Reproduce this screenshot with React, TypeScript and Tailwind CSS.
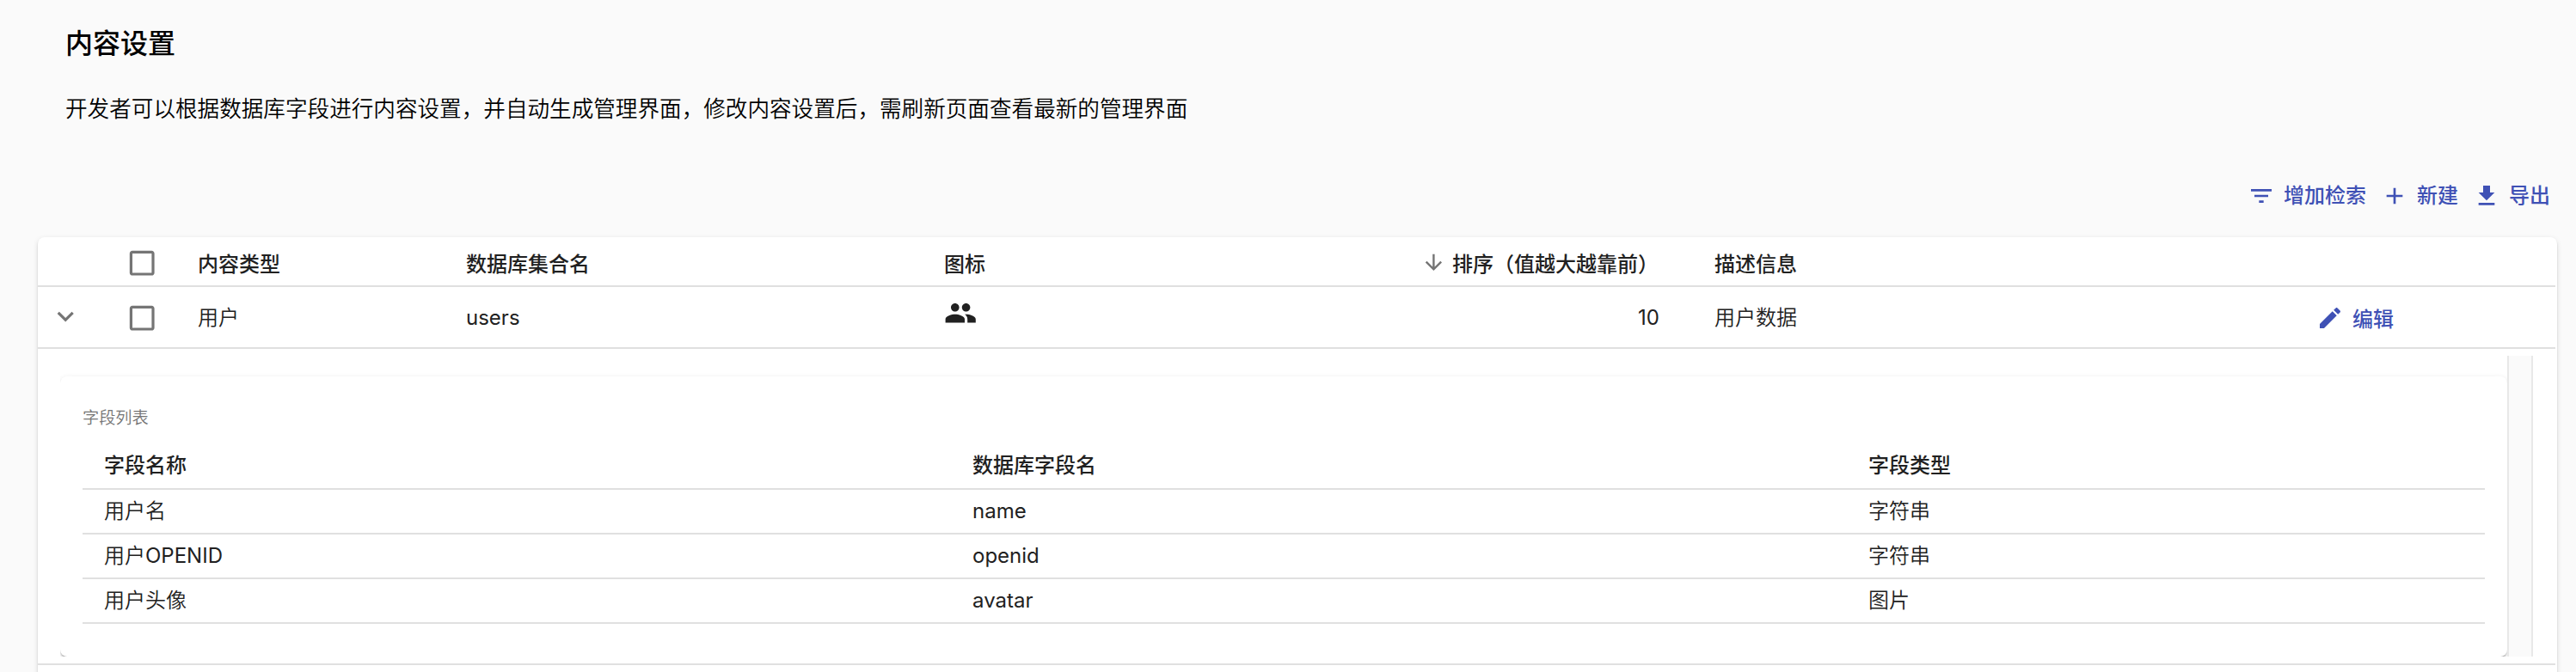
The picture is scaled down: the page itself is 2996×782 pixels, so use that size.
import type { ReactNode } from "react";

const ICONS = {
  filter: "M10 18h4v-2h-4v2zM3 6v2h18V6H3zm3 7h12v-2H6v2z",
  add: "M19 13h-6v6h-2v-6H5v-2h6V5h2v6h6v2z",
  download: "M19 9h-4V3H9v6H5l7 7 7-7zM5 18v2h14v-2H5z",
  edit: "M3 17.25V21h3.75L17.81 9.94l-3.75-3.75L3 17.25zM20.71 7.04c.39-.39.39-1.02 0-1.41l-2.34-2.34c-.39-.39-1.02-.39-1.41 0l-1.83 1.83 3.75 3.75 1.83-1.83z",
  checkbox: "M19 5v14H5V5h14m0-2H5c-1.1 0-2 .9-2 2v14c0 1.1.9 2 2 2h14c1.1 0 2-.9 2-2V5c0-1.1-.9-2-2-2z",
  chevron: "M16.59 8.59L12 13.17 7.41 8.59 6 10l6 6 6-6z",
  arrowDown: "M20 12l-1.41-1.41L13 16.17V4h-2v12.17l-5.58-5.59L4 12l8 8 8-8z",
  group:
    "M16 11c1.66 0 2.99-1.34 2.99-3S17.66 5 16 5c-1.66 0-3 1.34-3 3s1.34 3 3 3zm-8 0c1.66 0 2.99-1.34 2.99-3S9.66 5 8 5C6.34 5 5 6.34 5 8s1.34 3 3 3zm0 2c-2.33 0-7 1.17-7 3.5V19h14v-2.5c0-2.33-4.67-3.5-7-3.5zm8 0c-.29 0-.62.02-.97.05 1.16.84 1.97 1.97 1.97 3.45V19h6v-2.5c0-2.33-4.67-3.5-7-3.5z",
};

function Icon({ name, className }: { name: keyof typeof ICONS; className: string }) {
  return (
    <svg viewBox="0 0 24 24" fill="currentColor" className={`block shrink-0 ${className}`}>
      <path d={ICONS[name]} />
    </svg>
  );
}

function Action({ icon, children }: { icon: keyof typeof ICONS; children: ReactNode }) {
  return (
    <button className="flex items-center gap-2.5 text-[24px] leading-8 font-medium text-[#3f51b5]">
      <Icon name={icon} className="size-8" />
      <span>{children}</span>
    </button>
  );
}

const ROW =
  "mr-0.5 grid grid-cols-[102px_60px_312px_556px_896px_700px_1fr] items-center border-b-2 border-[#e0e0e0]";

const FIELD_ROW =
  "grid grid-cols-[1010px_1042px_1fr] items-center border-b-2 border-[#e0e0e0] *:pl-[25px]";

const FIELDS = [
  { label: "用户名", name: "name", type: "字符串" },
  { label: <>用户<span className="font-normal">OPENID</span></>, name: "openid", type: "字符串" },
  { label: "用户头像", name: "avatar", type: "图片" },
];

const PAPER =
  "bg-white shadow-[0_4px_2px_-2px_rgba(0,0,0,0.2),0_2px_2px_0_rgba(0,0,0,0.14),0_2px_6px_0_rgba(0,0,0,0.12)]";

export default function App() {
  return (
    <div className="h-[782px] overflow-hidden bg-[#fafafa] font-['Inter','Noto_Sans_CJK_SC',sans-serif] font-[350] text-[#212121]">
      <header className="flex h-[204px] flex-col pt-[30px] pl-[76px] text-black">
        <h1 className="text-[32px] leading-[42px] font-medium">内容设置</h1>
        <p className="mt-[36px] text-[25.6px] leading-[38px]">
          开发者可以根据数据库字段进行内容设置，并自动生成管理界面，修改内容设置后，需刷新页面查看最新的管理界面
        </p>
      </header>

      <div className="flex h-[72px] items-start justify-end gap-[17px] pt-2 pr-[30px]">
        <Action icon="filter">增加检索</Action>
        <Action icon="add">新建</Action>
        <Action icon="download">导出</Action>
      </div>

      <main className={`mr-[22px] ml-[44px] h-[560px] rounded-lg text-[24px] leading-8 ${PAPER}`}>
        <div className={`h-[58px] pt-1 font-medium ${ROW}`}>
          <span />
          <Icon name="checkbox" className="size-[38.4px] text-[#757575]" />
          <span className="pt-1 pl-6">内容类型</span>
          <span className="pt-1 pl-6">数据库集合名</span>
          <span className="flex items-center justify-between pr-[41px] pl-6">
            <span className="pt-1">图标</span>
            <span className="flex items-center gap-[7px]">
              <Icon name="arrowDown" className="-mt-0.5 size-[28.8px] text-[#757575]" />
              <span className="pt-1">排序（值越大越靠前）</span>
            </span>
          </span>
          <span className="pt-1 pl-6">描述信息</span>
          <span />
        </div>

        <div className={`h-[72px] pt-0.5 ${ROW}`}>
          <Icon name="chevron" className="-mt-1 ml-[13px] size-[38.4px] text-[#757575]" />
          <Icon name="checkbox" className="size-[38.4px] text-[#757575]" />
          <span className="pl-6">用户</span>
          <span className="pl-6 font-normal">users</span>
          <span className="flex items-center justify-between pr-10 pl-6">
            <Icon name="group" className="-mt-3 size-[38.4px]" />
            <span className="font-normal">10</span>
          </span>
          <span className="pl-6">用户数据</span>
          <span className="pl-6">
            <Action icon="edit">
              <span className="block pt-[3px]">编辑</span>
            </Action>
          </span>
        </div>

        <div className="mr-0.5 flex h-[368px] border-b-2 border-[#e0e0e0] pt-2 pr-[26px] pb-2 pl-[26px]">
          <div className="flex h-[350px] flex-1 flex-col overflow-hidden pt-6">
            <section className={`flex-1 rounded-lg px-[26px] pt-[34px] ${PAPER}`}>
              <div className="text-[19.2px] leading-7 text-[#757575]">字段列表</div>
              <div className="mt-2">
                <div className={`h-[62px] pt-2 font-medium ${FIELD_ROW}`}>
                  <span>字段名称</span>
                  <span>数据库字段名</span>
                  <span>字段类型</span>
                </div>
                {FIELDS.map((field) => (
                  <div key={field.name} className={`h-[52px] ${FIELD_ROW}`}>
                    <span>{field.label}</span>
                    <span className="font-normal">{field.name}</span>
                    <span>{field.type}</span>
                  </div>
                ))}
              </div>
            </section>
          </div>
          <div className="h-[350px] w-[30px] border-x-2 border-[#e8e8e8] bg-[#fafafa]" />
        </div>
      </main>
    </div>
  );
}
